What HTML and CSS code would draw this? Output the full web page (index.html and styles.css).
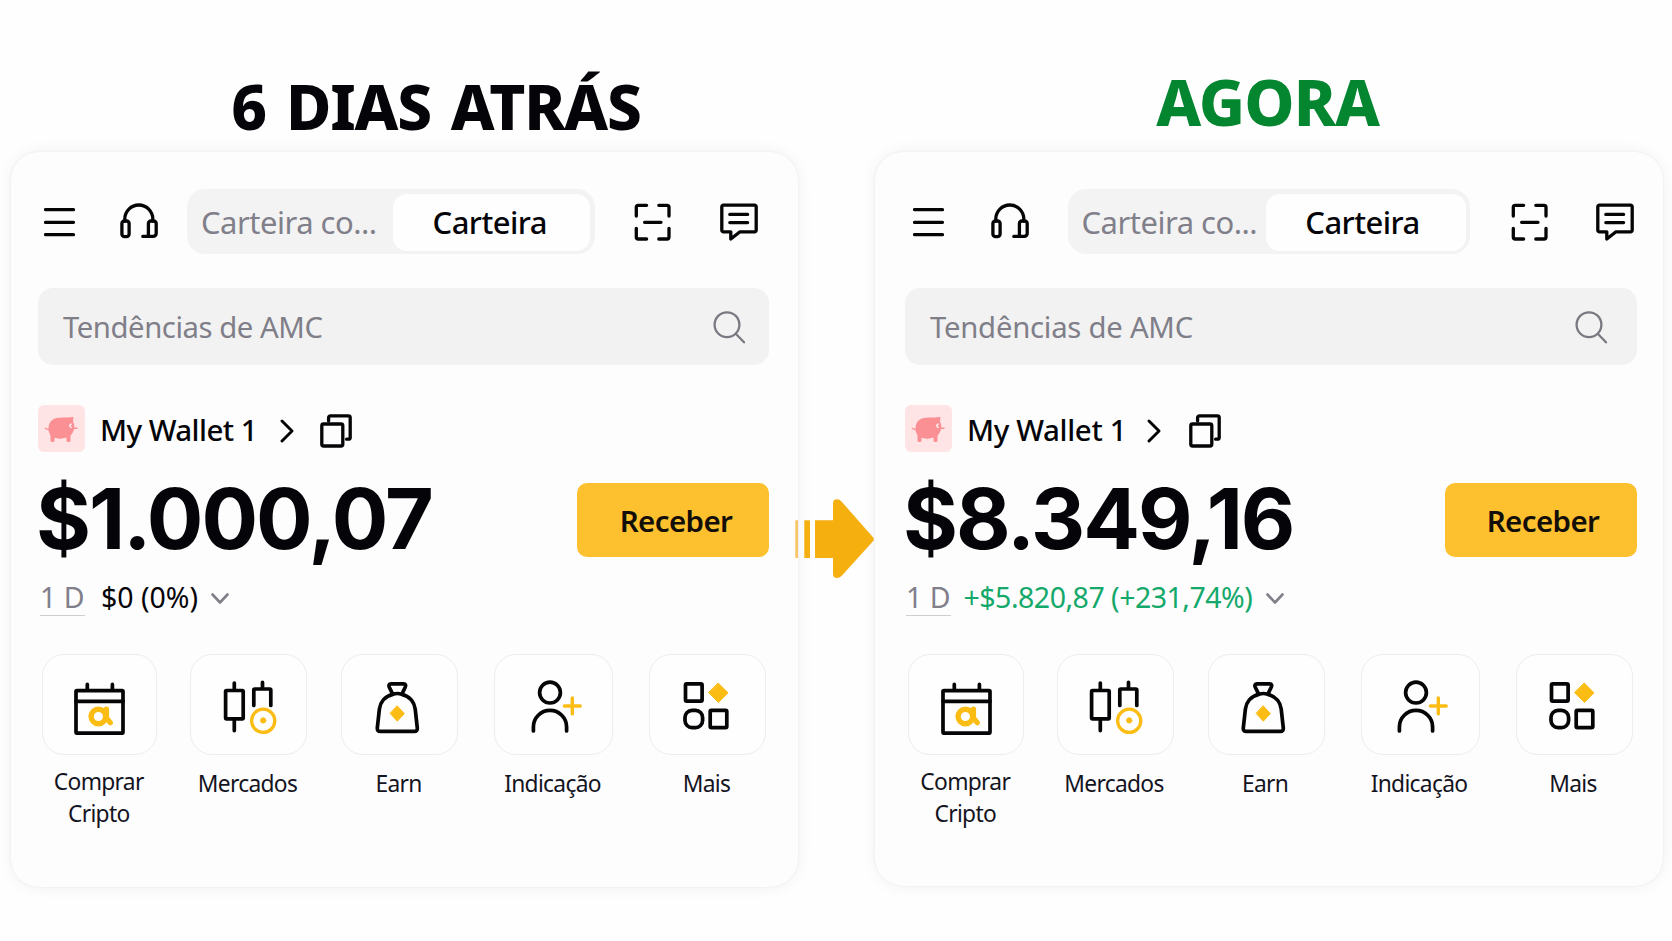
FILE: index.html
```html
<!DOCTYPE html>
<html lang="pt-BR">
<head>
<meta charset="utf-8">
<title>Carteira</title>
<link rel="stylesheet" href="styles.css">
</head>
<body>
<svg class="sprite" aria-hidden="true">
  <symbol id="i-menu" viewBox="0 0 32 38"><path d="M1.5 6.7H29.5M1.5 19.3H29.5M1.5 31.7H29.5"/></symbol>
  <symbol id="i-support" viewBox="0 0 38 38"><path d="M4.8 18V16a14 14 0 0 1 28 0V18"/><rect x="1.9" y="18" width="7.2" height="15.6" rx="2.6"/><path d="M22.8 33.4H33.2a3 3 0 0 0 3-3V20.6a2.6 2.6 0 0 0-2.6-2.6H31a2.6 2.6 0 0 0-2.6 2.6V33"/></symbol>
  <symbol id="i-scan" viewBox="0 0 38 38"><path d="M12.6 2.3H4.3a2 2 0 0 0-2 2V13M24.8 2.3H33a2 2 0 0 1 2 2V13M12.6 36H4.3a2 2 0 0 1-2-2V25.3M24.8 36H33a2 2 0 0 0 2-2V25.3M10.6 19.3H27"/></symbol>
  <symbol id="i-message" viewBox="0 0 38 38"><path d="M3.4 2.2H34.6a1.6 1.6 0 0 1 1.6 1.6V27.2a1.6 1.6 0 0 1-1.6 1.6H20L10.8 36V28.8H3.4a1.6 1.6 0 0 1-1.6-1.6V3.8A1.6 1.6 0 0 1 3.4 2.2ZM9.8 11.4H27.6M9.8 19.6H27.6"/></symbol>
  <symbol id="i-search" viewBox="0 0 34 34"><circle cx="15" cy="14.7" r="12.4"/><path d="M24 24L32 32.3"/></symbol>
  <symbol id="i-chevron" viewBox="0 0 14 24"><path d="M2 2L12 12L2 22"/></symbol>
  <symbol id="i-caret" viewBox="0 0 18 12"><path d="M1.5 1.5L9 9.5L16.5 1.5"/></symbol>
  <symbol id="i-copy" viewBox="0 0 32 34"><rect x="1.8" y="10" width="21" height="22" rx="1.8"/><path d="M8.6 7V3.6A1.8 1.8 0 0 1 10.4 1.8H28.4A1.8 1.8 0 0 1 30.2 3.6V23.4a1.8 1.8 0 0 1-1.8 1.8H26.6"/></symbol>
  <symbol id="i-pig" viewBox="0 0 47 47">
    <g fill="#fb9094"><path d="M10.5 23.5C10.5 15.5 16 12.5 24 12.5H29L35.5 12L35 16.5C37 20 37 25 33.5 29.5C29 35 15 35 12 29.5C11 27.5 10.5 26 10.5 23.5Z"/>
    <rect x="12.5" y="29" width="4" height="8" rx="1.6"/><rect x="28.5" y="29" width="4" height="8" rx="1.6"/></g>
    <path d="M11.5 24.5Q8 24.8 7 22.8M36 23.2H39.5" fill="none" stroke="#fb9094" stroke-width="1.4"/>
    <path d="M34.2 18.6A2.3 2.3 0 1 0 34.6 22.6L32.8 21.3Z" fill="#ffe4e5"/>
  </symbol>
  <symbol id="i-buy" viewBox="0 0 60 60"><rect x="7" y="15.6" width="47" height="42.6" rx="1"/><path d="M7 26.3H54M18.3 15V9.4M43.4 15V9.4"/><g class="accent" stroke-width="5.4"><circle cx="29.4" cy="41.5" r="7.3"/><path d="M37.4 34.2V43L41.2 47.6"/></g></symbol>
  <symbol id="i-markets" viewBox="0 0 60 60"><rect x="6.6" y="15.5" width="17.6" height="28.3" rx="1"/><path d="M15.3 15V8M15.3 44V55.6M34.8 30.5V15a1 1 0 0 1 1-1H50.8a1 1 0 0 1 1 1V30.5M43.5 14V7.4"/><circle class="accent" cx="44.2" cy="45.8" r="11.6" stroke-width="3.3"/><circle class="accent-fill" cx="44.2" cy="45.4" r="2.6"/></symbol>
  <symbol id="i-earn" viewBox="0 0 60 60"><path d="M22.8 19.4L19.3 12.2Q18 8.9 21 8.9H33.6Q36.6 8.9 35.2 12.2L31.8 19.4M22.8 19.4Q27.3 17.6 31.8 19.4C40.5 21.5 44.4 28 45.2 34L47.3 53Q47.6 56.4 44.4 56.4H10.2Q7 56.4 7.3 53L9.4 34C10.2 28 14.1 21.5 22.8 19.4Z"/><path class="accent-fill" d="M27.3 31L34.3 38.6L27.3 46.2L20.3 38.6Z"/></symbol>
  <symbol id="i-invite" viewBox="0 0 60 60"><circle cx="26" cy="17.6" r="10.4"/><path d="M9.4 56V52A16.6 16.6 0 0 1 42.6 52V56"/><path class="accent" d="M40.4 31H56.2M48.3 23V38.9" stroke-width="3.4"/></symbol>
  <symbol id="i-more" viewBox="0 0 60 60"><rect x="7.5" y="8.9" width="16.6" height="17.2" rx="1.2"/><rect x="7" y="35.4" width="17.6" height="17.2" rx="7"/><rect x="32.2" y="35.4" width="16.6" height="17.2" rx="1.2"/><path class="accent-fill" d="M40.4 8.2L50 17.8L40.4 27.4L30.8 17.8Z"/></symbol>
</svg>

<main class="compare">
  <section class="panel before">
    <h2 class="title">6 DIAS ATRÁS</h2>
    <div class="card">
      <header class="topbar">
        <svg class="icon menu"><use href="#i-menu"/></svg>
        <svg class="icon support"><use href="#i-support"/></svg>
        <nav class="tabs"><span class="tab muted">Carteira co...</span><span class="tab active">Carteira</span></nav>
        <svg class="icon scan"><use href="#i-scan"/></svg>
        <svg class="icon message"><use href="#i-message"/></svg>
      </header>
      <div class="search"><span>Tendências de AMC</span><svg class="icon"><use href="#i-search"/></svg></div>
      <div class="wallet">
        <svg class="pig"><use href="#i-pig"/></svg>
        <span class="name">My Wallet 1</span>
        <svg class="icon chevron"><use href="#i-chevron"/></svg>
        <svg class="icon copy"><use href="#i-copy"/></svg>
      </div>
      <div class="balance"><strong>$1.000,07</strong><button class="receive">Receber</button></div>
      <div class="period"><span class="range">1 D</span><span class="change">$0 (0%)</span><svg class="icon caret"><use href="#i-caret"/></svg></div>
      <ul class="actions">
        <li><span class="tile"><svg class="icon"><use href="#i-buy"/></svg></span><span class="label tall">Comprar<br>Cripto</span></li>
        <li><span class="tile"><svg class="icon"><use href="#i-markets"/></svg></span><span class="label">Mercados</span></li>
        <li><span class="tile"><svg class="icon"><use href="#i-earn"/></svg></span><span class="label">Earn</span></li>
        <li><span class="tile"><svg class="icon"><use href="#i-invite"/></svg></span><span class="label">Indicação</span></li>
        <li><span class="tile"><svg class="icon"><use href="#i-more"/></svg></span><span class="label">Mais</span></li>
      </ul>
    </div>
  </section>

  <section class="panel after">
    <h2 class="title">AGORA</h2>
    <div class="card">
      <header class="topbar">
        <svg class="icon menu"><use href="#i-menu"/></svg>
        <svg class="icon support"><use href="#i-support"/></svg>
        <nav class="tabs"><span class="tab muted">Carteira co...</span><span class="tab active">Carteira</span></nav>
        <svg class="icon scan"><use href="#i-scan"/></svg>
        <svg class="icon message"><use href="#i-message"/></svg>
      </header>
      <div class="search"><span>Tendências de AMC</span><svg class="icon"><use href="#i-search"/></svg></div>
      <div class="wallet">
        <svg class="pig"><use href="#i-pig"/></svg>
        <span class="name">My Wallet 1</span>
        <svg class="icon chevron"><use href="#i-chevron"/></svg>
        <svg class="icon copy"><use href="#i-copy"/></svg>
      </div>
      <div class="balance"><strong>$8.349,16</strong><button class="receive">Receber</button></div>
      <div class="period"><span class="range">1 D</span><span class="change">+$5.820,87 (+231,74%)</span><svg class="icon caret"><use href="#i-caret"/></svg></div>
      <ul class="actions">
        <li><span class="tile"><svg class="icon"><use href="#i-buy"/></svg></span><span class="label tall">Comprar<br>Cripto</span></li>
        <li><span class="tile"><svg class="icon"><use href="#i-markets"/></svg></span><span class="label">Mercados</span></li>
        <li><span class="tile"><svg class="icon"><use href="#i-earn"/></svg></span><span class="label">Earn</span></li>
        <li><span class="tile"><svg class="icon"><use href="#i-invite"/></svg></span><span class="label">Indicação</span></li>
        <li><span class="tile"><svg class="icon"><use href="#i-more"/></svg></span><span class="label">Mais</span></li>
      </ul>
    </div>
  </section>

  <svg class="arrow" viewBox="0 0 80 82" aria-hidden="true">
    <rect x=".3" y="22.3" width="1.2" height="37.7" fill="#f8c562"/><rect x="1.5" y="22.3" width="1.2" height="37.7" fill="#f6ab22"/>
    <rect x="9.3" y="22.3" width="5.7" height="37.7"/>
    <path d="M20 22.3H38V5.5Q38 1.3 42 1.3Q44.5 1.3 46.5 3.5L78 39.2Q79.8 41.2 78 43.2L46.5 78Q44.5 80 42 80Q38 80 38 76V60H20Z"/>
  </svg>
</main>
</body>
</html>
```
FILE: styles.css
```css
* { box-sizing: border-box; }

body {
  margin: 0;
  background: #fefefe;
  color: #050509;
  font-family: "Noto Sans", "Open Sans", sans-serif;
}

.sprite { display: none; }

.compare {
  position: relative;
  display: flex;
  gap: 77px;
  width: 1672px;
  height: 941px;
  padding-left: 11px;
  overflow: hidden;
}

.panel { width: 787px; }
.after { width: 788px; }

.title {
  margin: 75.5px 0 15.5px;
  padding-left: 63px;
  font-size: 62px;
  font-weight: 800;
  line-height: 61px;
  letter-spacing: -1.2px;
  word-spacing: 5px;
  text-align: center;
  white-space: nowrap;
}
.after .title {
  margin: 71px 0 20px;
  padding: 0 3px 0 0;
  color: #048530;
  font-size: 63.5px;
  letter-spacing: -1px;
}

.card {
  height: 735px;
  padding: 37px 29px 0 27px;
  border-radius: 28px;
  background: #fdfdfd;
  box-shadow: 0 0 2px rgba(0, 0, 0, .08), 0 0 16px rgba(0, 0, 0, .06);
}
.after .card { height: 734px; padding: 37px 26px 0 30px; }

.icon {
  display: block;
  fill: none;
  stroke: #050507;
  stroke-width: 3.3;
  stroke-linecap: round;
  stroke-linejoin: round;
}

.topbar {
  display: grid;
  grid-template-columns: 75.8px 67.5px 447px 86px 38px;
  align-items: center;
  height: 65px;
  padding-left: 6.2px;
}
.after .topbar { grid-template-columns: 77.5px 77.5px 443px 85px 38px; padding-left: 8px; }
.topbar .icon { width: 38px; height: 38px; }
.topbar .menu { width: 32px; }

.tabs {
  display: grid;
  grid-template-columns: 1fr 197.5px;
  width: 407.5px;
  height: 65px;
  padding: 5px 4.5px 4px 0;
  border-radius: 18px;
  background: #f3f3f3;
  font-size: 31px;
  line-height: 57px;
  white-space: nowrap;
}
.after .tabs { grid-template-columns: 1fr 200px; width: 402px; }
.tab.muted { padding-left: 13.5px; color: #807f8a; letter-spacing: -.5px; }
.tab.active {
  padding-right: 4px;
  border-radius: 14px;
  background: #fefefe;
  font-weight: 500;
  letter-spacing: -.55px;
  text-align: center;
}
.after .tab.active { padding-right: 6px; }

.search {
  display: flex;
  align-items: center;
  justify-content: space-between;
  height: 77px;
  margin-top: 34px;
  padding: 1px 23px 0 25px;
  border-radius: 15px;
  background: #f2f2f2;
  color: #807f89;
  font-size: 29.3px;
  letter-spacing: -.45px;
}
.after .search { padding: 1px 29px 0 25px; letter-spacing: -.25px; }
.search .icon { width: 34px; height: 34px; stroke: #7a7982; stroke-width: 2.3; }

.wallet {
  display: flex;
  align-items: center;
  height: 47px;
  margin-top: 39.5px;
}
.pig { width: 47px; height: 47px; border-radius: 6px; background: #ffe4e5; }
.name {
  width: 160px;
  margin: 3px 0 0 15px;
  font-size: 29.5px;
  font-weight: 500;
  line-height: 46px;
  letter-spacing: -.55px;
  white-space: nowrap;
}
.after .name { letter-spacing: -.35px; }
.chevron { width: 14px; height: 24px; margin: 6px 0 0 20px; stroke-width: 2.9; }
.copy { width: 32px; height: 34px; margin: 5px 0 0 25.500px; }
.after .copy { margin-left: 27.5px; }

.balance {
  display: flex;
  justify-content: space-between;
  height: 74px;
  margin-top: 31.5px;
}
.balance strong {
  margin: -1px 0 0 -2px;
  font-family: Inter, sans-serif;
  font-size: 84px;
  font-weight: 700;
  line-height: 74px;
  letter-spacing: -2px;
  white-space: nowrap;
}
.receive {
  width: 192px;
  height: 74px;
  padding: 1px 0 0 6px;
  border: 0;
  border-radius: 10px;
  background: #fdc130;
  color: #130f08;
  font: 600 29.5px "Noto Sans", sans-serif;
  letter-spacing: -.6px;
}
.after .receive { padding-left: 4px; }

.period {
  display: flex;
  align-items: center;
  height: 43px;
  margin-top: 17px;
  font-size: 28.5px;
  white-space: nowrap;
}
.range {
  width: 45.5px;
  height: 40px;
  margin-left: 1.5px;
  padding-left: .5px;
  border-bottom: 1.5px solid #cfcfd3;
  color: #807f8a;
  line-height: 43px;
}
.after .range { margin-left: .5px; padding-left: .5px; }
.change { margin: 3px 0 0 16px; font-weight: 450; line-height: 43px; }
.after .change { margin-left: 12.5px; color: #14a96b; font-weight: 430; letter-spacing: -.5px; }
.caret { width: 18px; height: 12px; margin: 6px 0 0 13px; stroke: #807f8a; stroke-width: 2.6; }
.after .caret { margin-left: 14px; }

.actions {
  display: grid;
  grid-template-columns: 148.5px 151px 153px 155px 118px;
  margin: 37px 0 0;
  padding: 0 0 0 3.5px;
  list-style: none;
}
.after .actions { padding-left: 3px; }
.actions li { display: flex; flex-direction: column; align-items: center; width: 117px; }
.actions li:first-child { width: 115.5px; }
.actions li:nth-child(4) { width: 119px; }
.tile {
  display: grid;
  place-items: center;
  width: 100%;
  height: 101px;
  border: 1px solid #ededed;
  border-radius: 22px;
  background: #fefefe;
}
.tile .icon { width: 60px; height: 60px; stroke-width: 3.7; }
.accent { stroke: #fbbc14; }
.accent-fill { fill: #fbbc14; stroke: #fbbc14; stroke-width: 1; }
.label {
  margin: 12.5px 2px 0 0;
  color: #14141f;
  font-size: 22.8px;
  line-height: 32px;
  letter-spacing: -.7px;
  text-align: center;
  white-space: nowrap;
}
.label.tall { margin: 11px 1px 0 0; }

.arrow {
  position: absolute;
  left: 795px;
  top: 498px;
  width: 80px;
  height: 82px;
  fill: #f5af0f;
}
```
